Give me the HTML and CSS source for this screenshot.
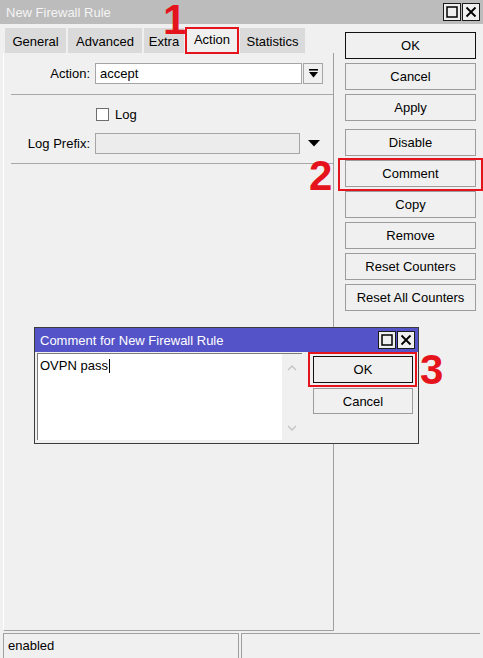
FILE: index.html
```html
<!DOCTYPE html>
<html>
<head>
<meta charset="utf-8">
<link rel="stylesheet" href="styles.css">
</head>
<body>
<div class="window">
  <div class="titlebar">
    <span class="title">New Firewall Rule</span>
    <div class="wbtns">
      <span class="wbtn"><svg width="12" height="12" viewBox="0 0 12 12"><rect x="1" y="1" width="10" height="10" fill="none" stroke="#000" stroke-width="1.5"/></svg></span>
      <span class="wbtn"><svg width="12" height="12" viewBox="0 0 12 12"><path d="M1.5 1.5 L10.5 10.5 M10.5 1.5 L1.5 10.5" stroke="#000" stroke-width="1.8"/></svg></span>
    </div>
  </div>
  <div class="main">
    <div class="left">
      <div class="tabs">
        <div class="tab t-general">General</div>
        <div class="tab t-advanced">Advanced</div>
        <div class="tab t-extra">Extra</div>
        <div class="tab t-action active">Action</div>
        <div class="tab t-stats">Statistics</div>
      </div>
      <div class="panel">
        <div class="row">
          <div class="label">Action:</div>
          <div class="input">accept</div>
          <div class="ddbtn"><svg width="9" height="9" viewBox="0 0 9 9"><rect x="0" y="0" width="9" height="1.6" fill="#000"/><polygon points="0,3 9,3 4.5,8.5" fill="#000"/></svg></div>
        </div>
        <div class="sep"></div>
        <div class="logrow">
          <span class="checkbox"></span>
          <span class="loglabel">Log</span>
        </div>
        <div class="row prefixrow">
          <div class="label">Log Prefix:</div>
          <div class="input disabled"></div>
          <svg class="tri" width="12" height="7" viewBox="0 0 12 7"><polygon points="0,0 12,0 6,6.5" fill="#000"/></svg>
        </div>
        <div class="sep sep2"></div>
      </div>
    </div>
    <div class="right">
      <div class="btn default">OK</div>
      <div class="btn">Cancel</div>
      <div class="btn">Apply</div>
      <div class="btn spaced">Disable</div>
      <div class="btn">Comment</div>
      <div class="btn">Copy</div>
      <div class="btn">Remove</div>
      <div class="btn">Reset Counters</div>
      <div class="btn">Reset All Counters</div>
    </div>
  </div>
  <div class="status">
    <div class="field f1">enabled</div>
    <div class="field f2"></div>
  </div>

  <div class="dialog">
    <div class="dtitle">
      <span>Comment for New Firewall Rule</span>
      <div class="wbtns">
        <span class="wbtn"><svg width="12" height="12" viewBox="0 0 12 12"><rect x="1" y="1" width="10" height="10" fill="none" stroke="#000" stroke-width="1.5"/></svg></span>
        <span class="wbtn"><svg width="12" height="12" viewBox="0 0 12 12"><path d="M1.5 1.5 L10.5 10.5 M10.5 1.5 L1.5 10.5" stroke="#000" stroke-width="1.8"/></svg></span>
      </div>
    </div>
    <div class="dbody">
      <div class="textarea">
        <div class="text">OVPN pass<span class="caret"></span></div>
        <div class="scroll">
          <svg width="10" height="6" viewBox="0 0 10 6"><polyline points="1,5 5,1 9,5" fill="none" stroke="#c4c4c4" stroke-width="1.4"/></svg>
          <svg width="10" height="6" viewBox="0 0 10 6"><polyline points="1,1 5,5 9,1" fill="none" stroke="#c4c4c4" stroke-width="1.4"/></svg>
        </div>
      </div>
      <div class="dbtns">
        <div class="btn default dbtn">OK</div>
        <div class="btn dbtn">Cancel</div>
      </div>
    </div>
  </div>

  <div class="mark box-action"></div>
  <div class="mark box-comment"></div>
  <div class="mark box-ok"></div>
  <div class="num n1">1</div>
  <div class="num n2">2</div>
  <div class="num n3">3</div>
</div>
</body>
</html>
```

FILE: styles.css
```css
* { box-sizing: border-box; }
body {
  margin: 0;
  font-family: "Liberation Sans", Arial, sans-serif;
  font-size: 13px;
  color: #000;
  background: #f0f0f0;
}
.window {
  position: relative;
  width: 483px;
  height: 658px;
  overflow: hidden;
  background: #f0f0f0;
}
.titlebar {
  height: 24px;
  background: #bcbcbc;
  color: #f4f4f4;
  display: flex;
  align-items: center;
  justify-content: space-between;
  padding: 0 3px 0 6px;
}
.wbtns { display: flex; gap: 1px; }
.wbtn {
  width: 18px;
  height: 18px;
  border: 1px solid #1a1a1a;
  background: #efefef;
  display: flex;
  align-items: center;
  justify-content: center;
}
.main { display: flex; height: 609px; }
.left { width: 334px; display: flex; flex-direction: column; }
.tabs {
  display: flex;
  gap: 2px;
  margin: 4px 0 0 5px;
  height: 25px;
  align-items: flex-end;
}
.tab {
  height: 25px;
  background: #dadada;
  display: flex;
  align-items: center;
  justify-content: center;
  padding-top: 2px;
}
.t-general { width: 61px; }
.t-advanced { width: 74px; }
.t-extra { width: 40px; }
.t-action { width: 52px; }
.t-stats { width: 65px; }
.tab.active {
  background: #f0f0f0;
  height: 27px;
  padding-top: 0;
}
.panel {
  margin: 0 0 2px 3px;
  width: 331px;
  flex: 1;
  border-left: 1px solid #ffffff;
  border-right: 1px solid #a0a0a0;
  border-bottom: 1px solid #a0a0a0;
  padding-top: 10px;
}
.row { display: flex; align-items: center; height: 21px; }
.label { width: 86px; text-align: right; margin-right: 5px; }
.input {
  width: 207px;
  height: 21px;
  border: 1px solid #a5a5a5;
  background: #fff;
  padding-left: 4px;
  line-height: 19px;
}
.input.disabled { width: 205px; background: #ececec; }
.ddbtn {
  width: 20px;
  height: 21px;
  margin-left: 1px;
  border: 1px solid #a5a5a5;
  background: #f0f0f0;
  display: flex;
  align-items: center;
  justify-content: center;
}
.sep {
  margin: 10px 0 0 7px;
  height: 1px;
  background: #a8a8a8;
}
.logrow {
  display: flex;
  align-items: center;
  height: 16px;
  margin-top: 11px;
  padding-left: 92px;
}
.checkbox {
  width: 13px;
  height: 13px;
  border: 1px solid #6e6e6e;
  background: #fff;
  margin-right: 6px;
}
.prefixrow { margin-top: 11px; }
.tri { margin-left: 8px; }
.sep2 { margin-top: 9px; }
.right {
  width: 131px;
  margin-left: 11px;
  padding-top: 8px;
  display: flex;
  flex-direction: column;
  gap: 4px;
}
.btn {
  height: 27px;
  border: 1px solid #9c9c9c;
  background: #f0f0f0;
  display: flex;
  align-items: center;
  justify-content: center;
}
.btn.default { border-color: #111; }
.btn.spaced { margin-top: 4px; }
.status { display: flex; height: 25px; }
.field {
  height: 25px;
  border-top: 1px solid #a0a0a0;
  border-left: 1px solid #a0a0a0;
  padding-left: 4px;
  line-height: 23px;
}
.f1 { margin-left: 3px; width: 236px; border-right: 1px solid #a0a0a0; }
.f2 { margin-left: 2px; margin-right: 3px; flex: 1; }

.dialog {
  position: absolute;
  left: 34px;
  top: 327px;
  width: 385px;
  height: 117px;
  border: 1px solid #3c3c3c;
  background: #f0f0f0;
}
.dtitle {
  height: 24px;
  background: #5454c8;
  color: #fff;
  display: flex;
  align-items: center;
  justify-content: space-between;
  padding: 0 3px 0 5px;
}
.dbody { display: flex; padding: 1px 0 0 2px; }
.textarea {
  width: 265px;
  height: 87px;
  border-top: 1px solid #7a7a7a;
  border-left: 1px solid #7a7a7a;
  background: #fff;
  display: flex;
}
.text { flex: 1; padding: 4px 2px; line-height: 15px; }
.caret {
  display: inline-block;
  width: 1px;
  height: 14px;
  background: #000;
  vertical-align: -3px;
  margin-left: 1px;
}
.scroll {
  width: 20px;
  background: #f0f0f0;
  display: flex;
  flex-direction: column;
  justify-content: space-between;
  align-items: center;
  padding: 11px 0 9px;
}
.dbtns {
  display: flex;
  flex-direction: column;
  gap: 5px;
  margin: 3px 0 0 11px;
}
.dbtn { width: 100px; }
.dbtn + .dbtn { height: 26px; }

.mark {
  position: absolute;
  border: 2px solid #e5141c;
}
.box-action { left: 185px; top: 27px; width: 54px; height: 27px; }
.box-comment { left: 338px; top: 158px; width: 145px; height: 33px; }
.box-ok { left: 308px; top: 352px; width: 109px; height: 35px; }
.num {
  position: absolute;
  font-family: "Liberation Sans", Arial, sans-serif;
  font-weight: bold;
  font-size: 42px;
  line-height: 36px;
  color: #e5141c;
}
.n1 { left: 163px; top: 2px; }
.n2 { left: 309px; top: 158px; }
.n3 { left: 420px; top: 352px; }
```
